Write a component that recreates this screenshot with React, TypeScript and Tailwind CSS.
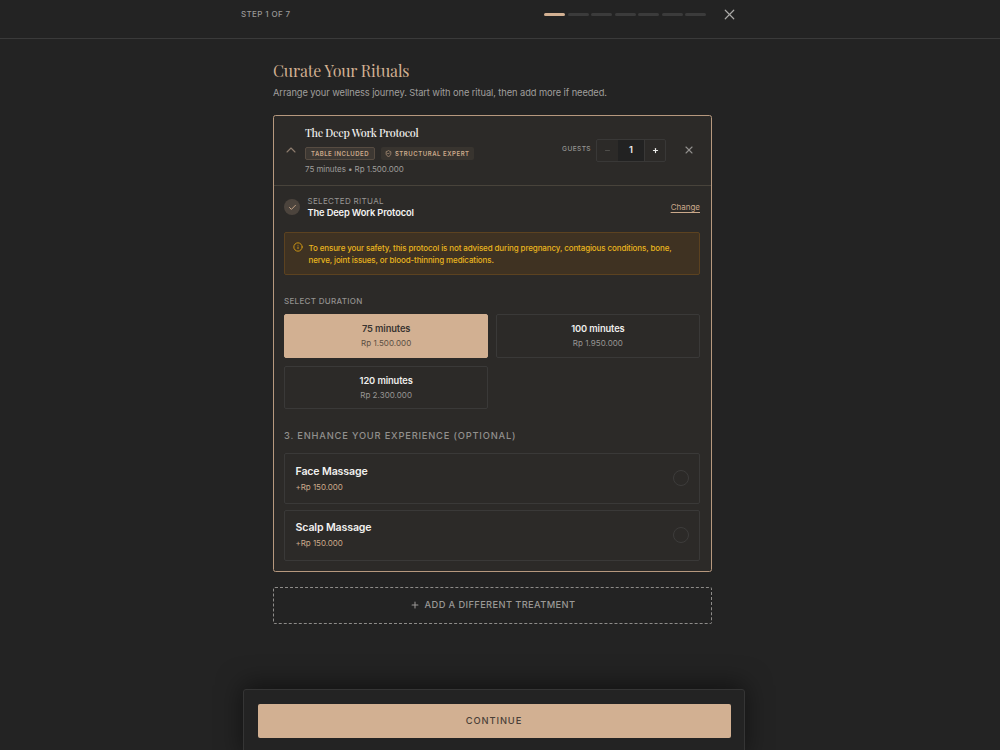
import React, { useState } from "react";
import { Check, ChevronUp, Info, Minus, Plus, ShieldCheck, X } from "lucide-react";

interface Duration {
  minutes: number;
  price: string;
}

interface Enhancement {
  name: string;
  price: string;
}

const TOTAL_STEPS = 7;

const durations: Duration[] = [
  { minutes: 75, price: "Rp 1.500.000" },
  { minutes: 100, price: "Rp 1.950.000" },
  { minutes: 120, price: "Rp 2.300.000" },
];

const enhancements: Enhancement[] = [
  { name: "Face Massage", price: "+Rp 150.000" },
  { name: "Scalp Massage", price: "+Rp 150.000" },
];

function StepHeader({ step }: { step: number }) {
  return (
    <header className="h-[39px] shrink-0 border-b border-[#3a3a3a]">
      <div className="ml-[241px] flex h-[29px] w-[495px] items-center justify-between">
        <span className="pb-px text-[8px] font-medium tracking-[0.36px] text-[#999897]">STEP {step} OF {TOTAL_STEPS}</span>
        <div className="flex items-center">
          <div className="mr-[15px] flex gap-[2.5px]">
            {Array.from({ length: TOTAL_STEPS }, (_, i) => (
              <div key={i} className={`h-[3px] w-[21px] rounded-full ${i < step ? "bg-[#d2b092]" : "bg-[#3b3b3b]"}`} />
            ))}
          </div>
          <button className="-mr-0.5"><X size={17} strokeWidth={1.7} className="text-[#aaa9a7]" /></button>
        </div>
      </div>
    </header>
  );
}

function GuestCounter() {
  const [guests, setGuests] = useState<number>(1);

  return (
    <div className="flex items-center">
      <span className="mr-[5px] text-[6.6px] font-medium tracking-[0.38px] text-[#969593]">GUESTS</span>
      <div className="flex h-[23px] w-[70px] overflow-hidden rounded-[2px] border border-[#393837]">
        <button onClick={() => setGuests(Math.max(1, guests - 1))} className="flex w-[21px] items-center justify-center text-[#555350]">
          <Minus size={7} strokeWidth={3} />
        </button>
        <span className="flex flex-1 items-center justify-center bg-[#222222] text-[9.3px] font-semibold text-[#eeeeec]">{guests}</span>
        <button onClick={() => setGuests(guests + 1)} className="flex w-[21px] items-center justify-center border-l border-[#393837] text-[#eeeeec]">
          <Plus size={7} strokeWidth={4} />
        </button>
      </div>
    </div>
  );
}

function TreatmentHeader() {
  return (
    <div className="flex h-[69.5px] items-center border-b border-[#48433b] pr-[16px] pl-[9px]">
      <ChevronUp size={16} strokeWidth={1.6} className="mr-[6px] shrink-0 text-[#8f7e6f]" />
      <div className="flex-1">
        <h3 className="h-[16px] font-['Playfair_Display','Liberation_Serif',serif] text-[10.8px] leading-[12px] font-medium tracking-[-0.24px] whitespace-nowrap text-[#f0efed]">The Deep Work Protocol</h3>
        <div className="mt-[4px] flex gap-[6px] text-[6px] font-semibold text-[#cba98b]">
          <span className="flex h-[13px] w-[70px] items-center justify-center rounded-[2px] border border-[#574c42] bg-[#3d3833] tracking-[0.5px]">TABLE INCLUDED</span>
          <span className="flex h-[13px] w-[93px] items-center justify-center gap-[2.5px] rounded-[2px] bg-[#38342f] tracking-[0.54px]">
            <ShieldCheck size={7} strokeWidth={2.2} />
            STRUCTURAL EXPERT
          </span>
        </div>
        <p className="mt-[4px] text-[8px] leading-[10px] tracking-[-0.06px] text-[#9e9c9a]">75 minutes • Rp 1.500.000</p>
      </div>
      <GuestCounter />
      <button className="ml-[17px]"><X size={12} strokeWidth={2.2} className="text-[#92908e]" /></button>
    </div>
  );
}

function SelectedRitual() {
  return (
    <div className="flex items-center">
      <div className="flex size-4 items-center justify-center rounded-full bg-[#4c443d] text-[#cba98b]">
        <Check size={9} strokeWidth={2.5} />
      </div>
      <div className="ml-[7.5px] flex-1">
        <p className="text-[8px] leading-[11px] tracking-[0.33px] text-[#989694]">SELECTED RITUAL</p>
        <p className="text-[9.3px] leading-[12px] font-semibold tracking-[-0.13px] text-[#f4f3f1]">The Deep Work Protocol</p>
      </div>
      <button className="text-[8px] text-[#cba98b] underline underline-offset-[1.5px]">Change</button>
    </div>
  );
}

function DurationPicker() {
  const [selected, setSelected] = useState<number>(75);

  return (
    <div className="grid grid-cols-2 gap-x-[7.5px] gap-y-2">
      {durations.map((d) => {
        const active = d.minutes === selected;
        return (
          <button
            key={d.minutes}
            onClick={() => setSelected(d.minutes)}
            className={`flex h-[43.5px] flex-col items-center justify-center rounded-[2px] border ${active ? "border-[#d2b092] bg-[#d2b092] text-[#3a3531]" : "border-[#3a3938] text-[#eeedeb]"}`}
          >
            <span className="text-[9.3px] leading-[13px] font-semibold tracking-[-0.1px]">{d.minutes} minutes</span>
            <span className={`mt-[2px] text-[8px] leading-[12px] tracking-[0.04px] ${active ? "text-[#5c4f43]" : "text-[#989694]"}`}>{d.price}</span>
          </button>
        );
      })}
    </div>
  );
}

function Enhancements() {
  return (
    <div className="flex flex-col gap-[5.5px]">
      {enhancements.map((item) => (
        <div key={item.name} className="flex h-[51px] items-center justify-between rounded-[2px] border border-[#3a3938] pr-[10px] pb-px pl-[10.5px]">
          <div>
            <p className="text-[10.6px] leading-[16px] font-semibold tracking-[-0.14px] text-[#f2f1ef]">{item.name}</p>
            <p className="mt-px text-[8px] leading-[12px] tracking-[-0.05px] text-[#cba98b]">{item.price}</p>
          </div>
          <div className="size-4 rounded-full border border-[#3d3c3b]" />
        </div>
      ))}
    </div>
  );
}

export default function App() {
  return (
    <div className="relative flex h-[750px] w-[1000px] flex-col overflow-hidden bg-[#232323] font-['Inter',sans-serif]">
      <StepHeader step={1} />

      <main className="ml-[273px] w-[439px] pt-[21px]">
        <h1 className="font-['Playfair_Display','Liberation_Serif',serif] text-[16px] leading-[21px] tracking-[-0.17px] text-[#d2b092]">Curate Your Rituals</h1>
        <p className="mt-[5px] text-[9.3px] leading-[13px] tracking-[-0.08px] text-[#a09f9d]">
          Arrange your wellness journey. Start with one ritual, then add more if needed.
        </p>

        <section className="mt-[16px] h-[457px] rounded-[2.5px] border border-[#b6987e] bg-[#2c2a28]">
          <TreatmentHeader />
          <div className="pt-[10px] pr-[11px] pl-[10px]">
            <SelectedRitual />
            <div className="mt-[13.5px] flex h-[42.5px] rounded-[2px] border border-[#5c4220] bg-[#3f3222] pt-[8.5px] pl-[8px] text-[#e9b51e]">
              <Info size={10} strokeWidth={2.2} className="mt-[0.5px] mr-[5.5px] shrink-0 text-[#d59b13]" />
              <p className="text-[8px] leading-[12.5px] font-medium tracking-[-0.12px] whitespace-nowrap">
                To ensure your safety, this protocol is not advised during pregnancy, contagious conditions, bone,
                <br />
                nerve, joint issues, or blood-thinning medications.
              </p>
            </div>
            <h4 className="mt-[20.5px] mb-[7px] text-[8px] leading-[12px] font-medium tracking-[0.3px] text-[#92908e]">SELECT DURATION</h4>
            <DurationPicker />
            <h4 className="mt-[21px] mb-[11px] text-[9.3px] leading-[12px] font-medium tracking-[0.82px] text-[#92908e]">
              3. ENHANCE YOUR EXPERIENCE (OPTIONAL)
            </h4>
            <Enhancements />
          </div>
        </section>

        <button className="mt-[15px] flex h-[37px] w-full items-center justify-center gap-[5px] rounded-[2px] border border-dashed border-[#8d8b89] pb-px text-[9.3px] font-medium tracking-[0.38px] text-[#9a9896]">
          <Plus size={10} strokeWidth={2.5} />
          ADD A DIFFERENT TREATMENT
        </button>
      </main>

      <footer className="absolute top-[689px] left-[243px] h-[70px] w-[502px] rounded-t-[3px] border border-[#353535] bg-[#232323] px-[13.5px] pt-[14px] shadow-[0_-4px_26px_rgba(0,0,0,0.5)]">
        <button className="h-[34px] w-[473px] rounded-[2px] bg-[#d2b092] pb-px text-[9.3px] font-medium tracking-[0.9px] text-[#4a4038]">CONTINUE</button>
      </footer>
    </div>
  );
}
